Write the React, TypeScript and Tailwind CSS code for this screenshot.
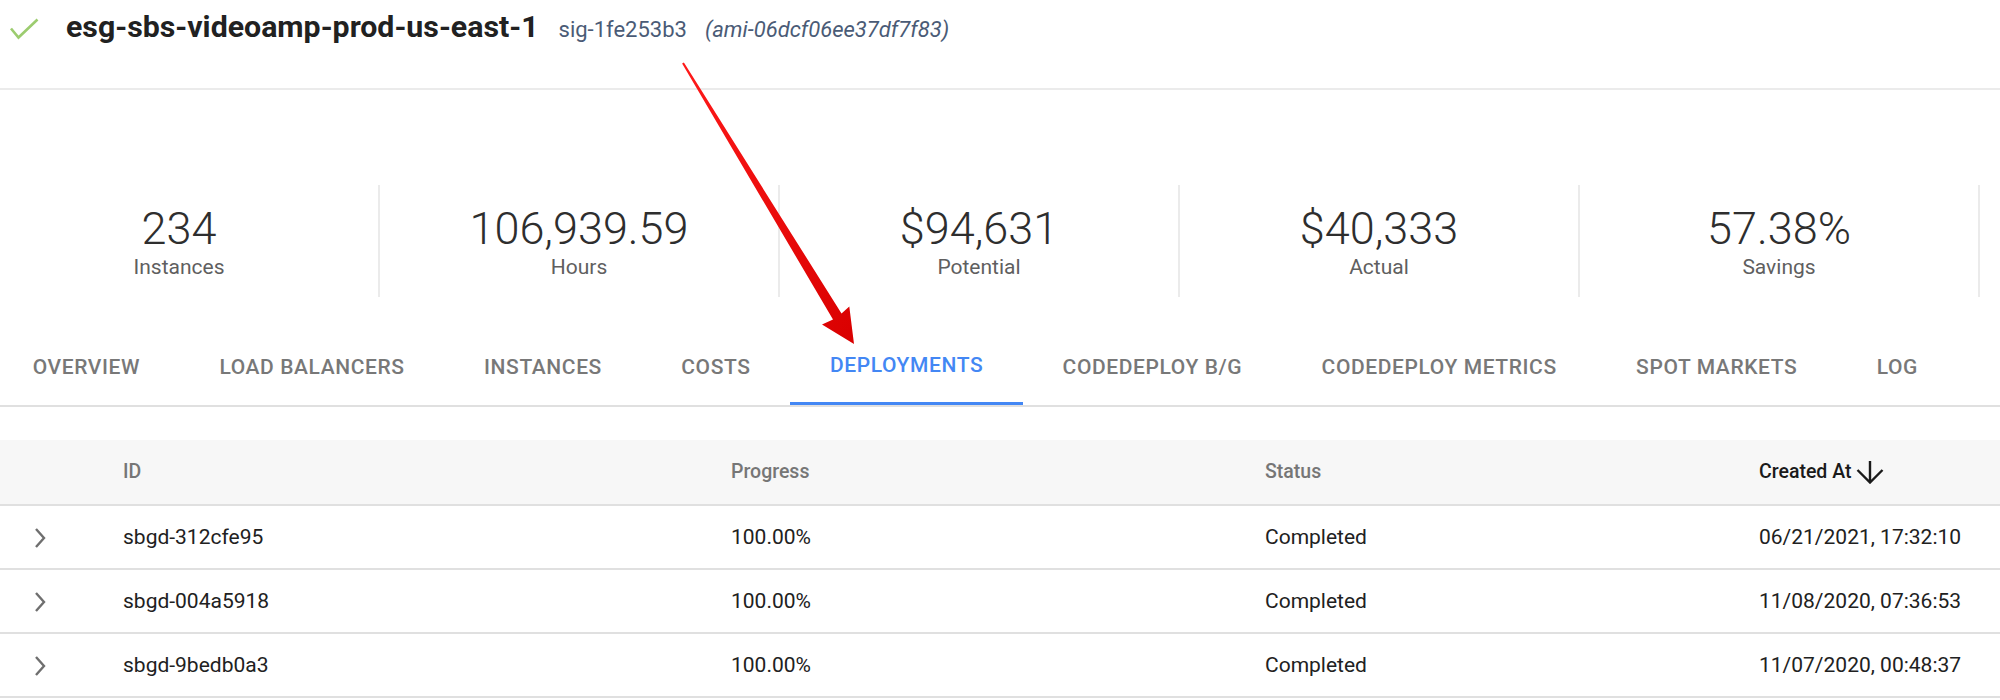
import React from 'react';

const stats = [
  { value: '234', label: 'Instances' },
  { value: '106,939.59', label: 'Hours' },
  { value: '$94,631', label: 'Potential' },
  { value: '$40,333', label: 'Actual' },
  { value: '57.38%', label: 'Savings' },
];

const tabs = [
  'Overview',
  'Load Balancers',
  'Instances',
  'Costs',
  'Deployments',
  'CodeDeploy B/G',
  'CodeDeploy Metrics',
  'Spot Markets',
  'Log',
];

const deployments = [
  { id: 'sbgd-312cfe95', progress: '100.00%', status: 'Completed', created: '06/21/2021, 17:32:10' },
  { id: 'sbgd-004a5918', progress: '100.00%', status: 'Completed', created: '11/08/2020, 07:36:53' },
  { id: 'sbgd-9bedb0a3', progress: '100.00%', status: 'Completed', created: '11/07/2020, 00:48:37' },
];

const cols = 'grid grid-cols-[123px_608px_534px_494px_1fr] items-center';

const App: React.FC = () => {
  return (
    <div className="relative w-[2000px] h-[700px] overflow-hidden bg-white font-[Roboto,sans-serif]">
      {/* group header */}
      <div className="flex items-start h-[90px] border-b-2 border-[#ebebeb] pl-[10px]">
        <svg width="30" height="22" viewBox="0 0 30 22" className="mt-[18px]">
          <polyline points="1,10.5 8.5,19.5 27.5,1.5" fill="none" stroke="#9ccc6f" strokeWidth="2.6" />
        </svg>
        <div className="flex items-baseline ml-[26px] pt-[9px] leading-[36px]">
          <h1 className="text-[30.3px] font-bold text-[#212121]">esg-sbs-videoamp-prod-us-east-1</h1>
          <span className="ml-[20px] text-[22px] text-[#4a5b76]">sig-1fe253b3</span>
          <span className="ml-[18px] text-[22px] italic text-[#4a5b76]">(ami-06dcf06ee37df7f83)</span>
        </div>
      </div>

      {/* summary numbers */}
      <div className="flex ml-[-20px] mt-[95px]">
        {stats.map((s) => (
          <div key={s.label} className="w-[400px] h-[112px] flex flex-col items-center border-r-2 border-[#ebebeb]">
            <div className="mt-[22px] text-[45px] leading-[44px] font-[350] text-[#2e2e2e]">{s.value}</div>
            <div className="mt-[4px] text-[21px] leading-[24px] text-[#5f5f5f]">{s.label}</div>
          </div>
        ))}
      </div>

      {/* tabs */}
      <div className="flex ml-[-7px] mt-[28px] border-b-2 border-[#e0e0e0]">
        {tabs.map((t) => {
          const active = t === 'Deployments';
          return (
            <div
              key={t}
              className={
                active
                  ? 'h-[80px] pt-[5px] px-[39.7px] flex items-center uppercase text-[21px] font-medium tracking-[0.6px] text-[#4387f4] border-b-[3px] border-[#4387f4] mb-[-2px]'
                  : 'h-[80px] pt-[5px] px-[39.7px] flex items-center uppercase text-[21px] font-medium tracking-[0.6px] text-[#787878]'
              }
            >
              {t}
            </div>
          );
        })}
      </div>

      {/* deployments table */}
      <div className="mt-[33px]">
        <div className={`${cols} h-[66px] bg-[#f7f7f7] border-b-2 border-[#e0e0e0] text-[19.5px] font-medium`}>
          <div />
          <div className="text-[#767676]">ID</div>
          <div className="text-[#767676]">Progress</div>
          <div className="text-[#767676]">Status</div>
          <div className="flex items-center text-[#1a1a1a]">
            Created At
            <svg width="28" height="24" viewBox="0 0 28 24" className="ml-[5px]">
              <path d="M14 1v21M1.5 10l12.5 12.5L26.5 10" fill="none" stroke="#1a1a1a" strokeWidth="2.4" />
            </svg>
          </div>
        </div>
        {deployments.map((d) => (
          <div key={d.id} className={`${cols} h-[64px] pt-[2px] border-b-2 border-[#e0e0e0] text-[21px] text-[#212121]`}>
            <div className="pl-[33px]">
              <svg width="14" height="22" viewBox="0 0 14 22">
                <polyline points="3,2 11,11 3,20" fill="none" stroke="#6f6f6f" strokeWidth="2.4" />
              </svg>
            </div>
            <div>{d.id}</div>
            <div>{d.progress}</div>
            <div>{d.status}</div>
            <div>{d.created}</div>
          </div>
        ))}
      </div>

      {/* red annotation arrow */}
      <svg className="absolute left-0 top-0 pointer-events-none" width="2000" height="700">
        <defs>
          <linearGradient id="arrowRed" x1="0" y1="0" x2="1" y2="1">
            <stop offset="0" stopColor="#ff1a1a" />
            <stop offset="1" stopColor="#d90000" />
          </linearGradient>
        </defs>
        <polygon
          points="683.9,62.5 841.5,313.5 849.3,306.5 854,344 822,324.5 833,319.5 682.1,63.5"
          fill="url(#arrowRed)"
        />
      </svg>
    </div>
  );
};

export default App;
